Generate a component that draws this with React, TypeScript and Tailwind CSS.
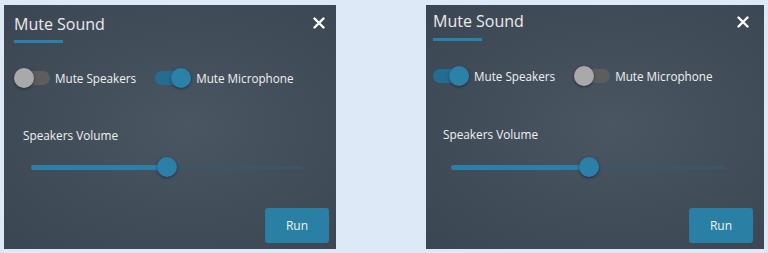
import { useState } from "react";

type Layout = {
  frame: string;
  rule: string;
  close: string;
  row: string;
  volume: string;
  slider: string;
};

// two captures of the same dialog, a few px apart
const layouts: Layout[] = [
  {
    frame: "w-[332px] pl-[10px] pr-[7px] pt-[7px] pb-[6px]",
    rule: "mt-[4px]",
    close: "mt-[5px] mr-[4px]",
    row: "mt-[25px]",
    volume: "mt-[39px] ml-[9px]",
    slider: "mt-[14px] ml-[17px] w-[272px]",
  },
  {
    frame: "w-[338px] pl-[7px] pr-[11px] pt-[4px] pb-[6px]",
    rule: "mt-[5px]",
    close: "mt-[7px] mr-[4px]",
    row: "mt-[25px]",
    volume: "mt-[40px] ml-[10px]",
    slider: "mt-[15px] ml-[18px] w-[275px]",
  },
];

function Toggle({ on, label, onClick }: { on: boolean; label: string; onClick: () => void }) {
  return (
    <button onClick={onClick} className="flex items-center gap-[5px] text-left">
      <span className="relative flex h-[20px] w-[36px] items-center">
        <span
          className={`h-[14px] w-[36px] rounded-full ${on ? "bg-[#236e90]" : "bg-[#5d5d5d]"}`}
        />
        <span
          className={`absolute top-0 h-[20px] w-[20px] rounded-full shadow-[0_1px_3px_rgba(0,0,0,0.45)] ${
            on ? "right-0 bg-[#2a82a8]" : "left-0 bg-[#a9a9a9]"
          }`}
        />
      </span>
      <span className="text-[11.7px] leading-[16px] text-[#f1f1f1]">{label}</span>
    </button>
  );
}

function Slider({ value, className }: { value: number; className: string }) {
  return (
    <div className={`relative flex h-[20px] items-center ${className}`}>
      <div className="h-[3px] w-full rounded-full bg-[#3a5669]" />
      <div
        className="absolute left-0 h-[5px] rounded-full bg-[#2a80a6]"
        style={{ width: `${value}%` }}
      />
      <div
        className="absolute top-0 h-[20px] w-[20px] -translate-x-1/2 rounded-full bg-[#2a80a6] shadow-[0_1px_3px_rgba(0,0,0,0.45)]"
        style={{ left: `${value}%` }}
      />
    </div>
  );
}

function MuteDialog({ layout, speakers }: { layout: Layout; speakers: boolean }) {
  const [muteSpeakers, setMuteSpeakers] = useState(speakers);
  const [muteMic, setMuteMic] = useState(!speakers);

  return (
    <div
      className={`flex h-[244px] flex-col bg-[radial-gradient(ellipse_at_55%_50%,#4b5663_0%,#434e5b_45%,#3c4653_100%)] ${layout.frame}`}
    >
      {/* Header */}
      <div className="flex items-start justify-between">
        <div>
          <h2 className="text-[16px] leading-[24px] text-[#ebebeb]">Mute Sound</h2>
          <div className={`h-[3px] w-[49px] bg-[#2a82a8] ${layout.rule}`} />
        </div>
        <button className={layout.close}>
          <svg width="12" height="12" viewBox="0 0 12 12">
            <path
              d="M1.5 1.5 L10.5 10.5 M10.5 1.5 L1.5 10.5"
              stroke="#ffffff"
              strokeWidth="2.4"
              strokeLinecap="round"
            />
          </svg>
        </button>
      </div>

      {/* Toggles */}
      <div className={`flex items-center gap-[19px] ${layout.row}`}>
        <Toggle on={muteSpeakers} label="Mute Speakers" onClick={() => setMuteSpeakers(!muteSpeakers)} />
        <Toggle on={muteMic} label="Mute Microphone" onClick={() => setMuteMic(!muteMic)} />
      </div>

      {/* Volume */}
      <div className={`text-[11.8px] leading-[16px] text-[#f1f1f1] ${layout.volume}`}>
        Speakers Volume
      </div>
      <Slider value={50} className={layout.slider} />

      <div className="mt-auto flex justify-end">
        <button className="h-[35px] w-[64px] rounded-[3px] bg-[#2a7fa4] text-[12px] text-[#eef3f6]">
          Run
        </button>
      </div>
    </div>
  );
}

export default function App() {
  return (
    <div
      className="flex h-[253px] w-[768px] items-start gap-[90px] bg-[#dde9f6] pl-[4px] pt-[5px]"
      style={{ fontFamily: "'Open Sans', sans-serif" }}
    >
      <MuteDialog layout={layouts[0]} speakers={false} />
      <MuteDialog layout={layouts[1]} speakers={true} />
    </div>
  );
}
